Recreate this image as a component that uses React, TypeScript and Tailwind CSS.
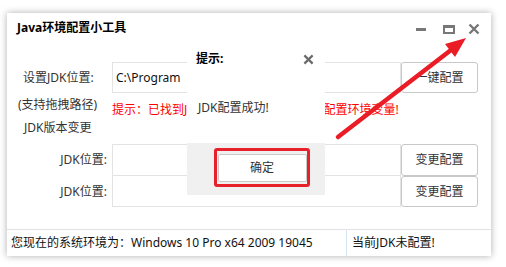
const font = { fontFamily: '"Noto Sans", "Noto Sans CJK SC", sans-serif' };

function CloseGlyph({ size, color }: { size: number; color: string }) {
  return (
    <svg width={size} height={size} viewBox="0 0 12 12">
      <path d="M1.5 1.5 L10.5 10.5 M10.5 1.5 L1.5 10.5" stroke={color} strokeWidth="2.4" />
    </svg>
  );
}

function TipDialog() {
  return (
    <div className="absolute left-[180px] top-[29px] flex h-[153px] w-[138px] flex-col bg-white">
      <div className="flex h-[34px] items-center justify-between pl-[9px] pr-[11px]">
        <span className="text-[12px] font-bold text-black">提示:</span>
        <CloseGlyph size={11} color="#6b6b6b" />
      </div>
      <div className="flex-1 pl-[11px] pt-[23px] text-[12px] leading-[18px] text-[#333]">JDK配置成功!</div>
      <div className="h-[52px] bg-[#f0f0f0] pl-[27px] pt-[5px]">
        <div className="flex h-[39px] w-[96px] items-center justify-center rounded-[3px] border-[3px] border-[#e8202a]">
          <div className="flex h-[28px] w-[89px] items-center justify-center rounded-[2px] border border-[#c9c9c9] bg-white text-[12px] text-[#333]">
            确定
          </div>
        </div>
      </div>
    </div>
  );
}

function Arrow() {
  return (
    <svg className="pointer-events-none absolute left-0 top-0" width="506" height="267">
      <line x1="338" y1="137" x2="451" y2="50" stroke="#ea1c26" strokeWidth="4.5" strokeLinecap="round" />
      <polygon points="466,38 445,44 455,57" fill="#ea1c26" />
    </svg>
  );
}

export default function App() {
  return (
    <div className="relative h-[267px] w-[506px] bg-white pl-[7px] pt-[13px]" style={font}>
      <div className="relative flex h-[243px] w-[484px] flex-col bg-white shadow-[0_0_7px_rgba(0,0,0,0.32)]">
        {/* Title bar */}
        <div className="flex h-[30px] items-center pl-[10px] pr-[11px]">
          <span className="flex-1 text-[12px] font-bold text-black">Java环境配置小工具</span>
          <span className="mt-[2px] h-[3px] w-[10px] bg-[#777]" />
          <span className="ml-[17px] mt-[2px] h-[9px] w-[12px] border-2 border-t-[3px] border-[#777]" />
          <span className="ml-[13px] mt-[2px] flex">
            <CloseGlyph size={12} color="#777" />
          </span>
        </div>

        {/* Row 1 */}
        <div className="mt-[19px] flex h-[31px]">
          <div className="flex w-[105px] items-center pl-[16px] text-[12px] text-[#333]">设置JDK位置:</div>
          <div className="flex w-[289px] items-center border border-[#e3e3e3] pl-[3px] text-[12px] text-[#111]">
            C:\Program
          </div>
          <div className="flex w-[77px] items-center justify-center rounded-[3px] border border-[#c8c8c8] text-[12px] text-[#333]">
            一键配置
          </div>
        </div>

        {/* Rows 2-3 */}
        <div className="flex h-[51px]">
          <div className="flex w-[105px] flex-col pt-[3px] text-[12px] leading-[18px] text-[#333]">
            <span className="pl-[11px]">(支持拖拽路径)</span>
            <span className="mt-[5px] pl-[17px]">JDK版本变更</span>
          </div>
          <div className="whitespace-nowrap pt-[8px] text-[12px] leading-[18px] text-[#ff0000]">
            提示：已找到JDK安装路径，请点击一键配置环境变量!
          </div>
        </div>

        {/* Row 4 */}
        <div className="flex h-[32px]">
          <div className="flex w-[105px] items-center justify-end pr-[5px] text-[12px] text-[#333]">JDK位置:</div>
          <div className="w-[289px] border border-[#e3e3e3]" />
          <div className="flex w-[77px] items-center justify-center rounded-[3px] border border-[#c8c8c8] text-[12px] text-[#333]">
            变更配置
          </div>
        </div>

        {/* Row 5 */}
        <div className="flex h-[31px]">
          <div className="flex w-[105px] items-center justify-end pr-[5px] text-[12px] text-[#333]">JDK位置:</div>
          <div className="w-[289px] border border-t-0 border-[#e3e3e3]" />
          <div className="flex w-[77px] items-center justify-center rounded-[3px] border border-[#c8c8c8] text-[12px] text-[#333]">
            变更配置
          </div>
        </div>

        <div className="flex-1" />

        {/* Status bar */}
        <div className="flex h-[27px] border-t border-[#e2e2e2] text-[12px] text-[#111]">
          <div className="flex w-[340px] items-center border-r border-[#d5e5f3] pl-[4px]">
            您现在的系统环境为：Windows 10 Pro x64 2009 19045
          </div>
          <div className="flex items-center pl-[5px]">当前JDK未配置!</div>
        </div>

        <TipDialog />
      </div>
      <Arrow />
    </div>
  );
}
